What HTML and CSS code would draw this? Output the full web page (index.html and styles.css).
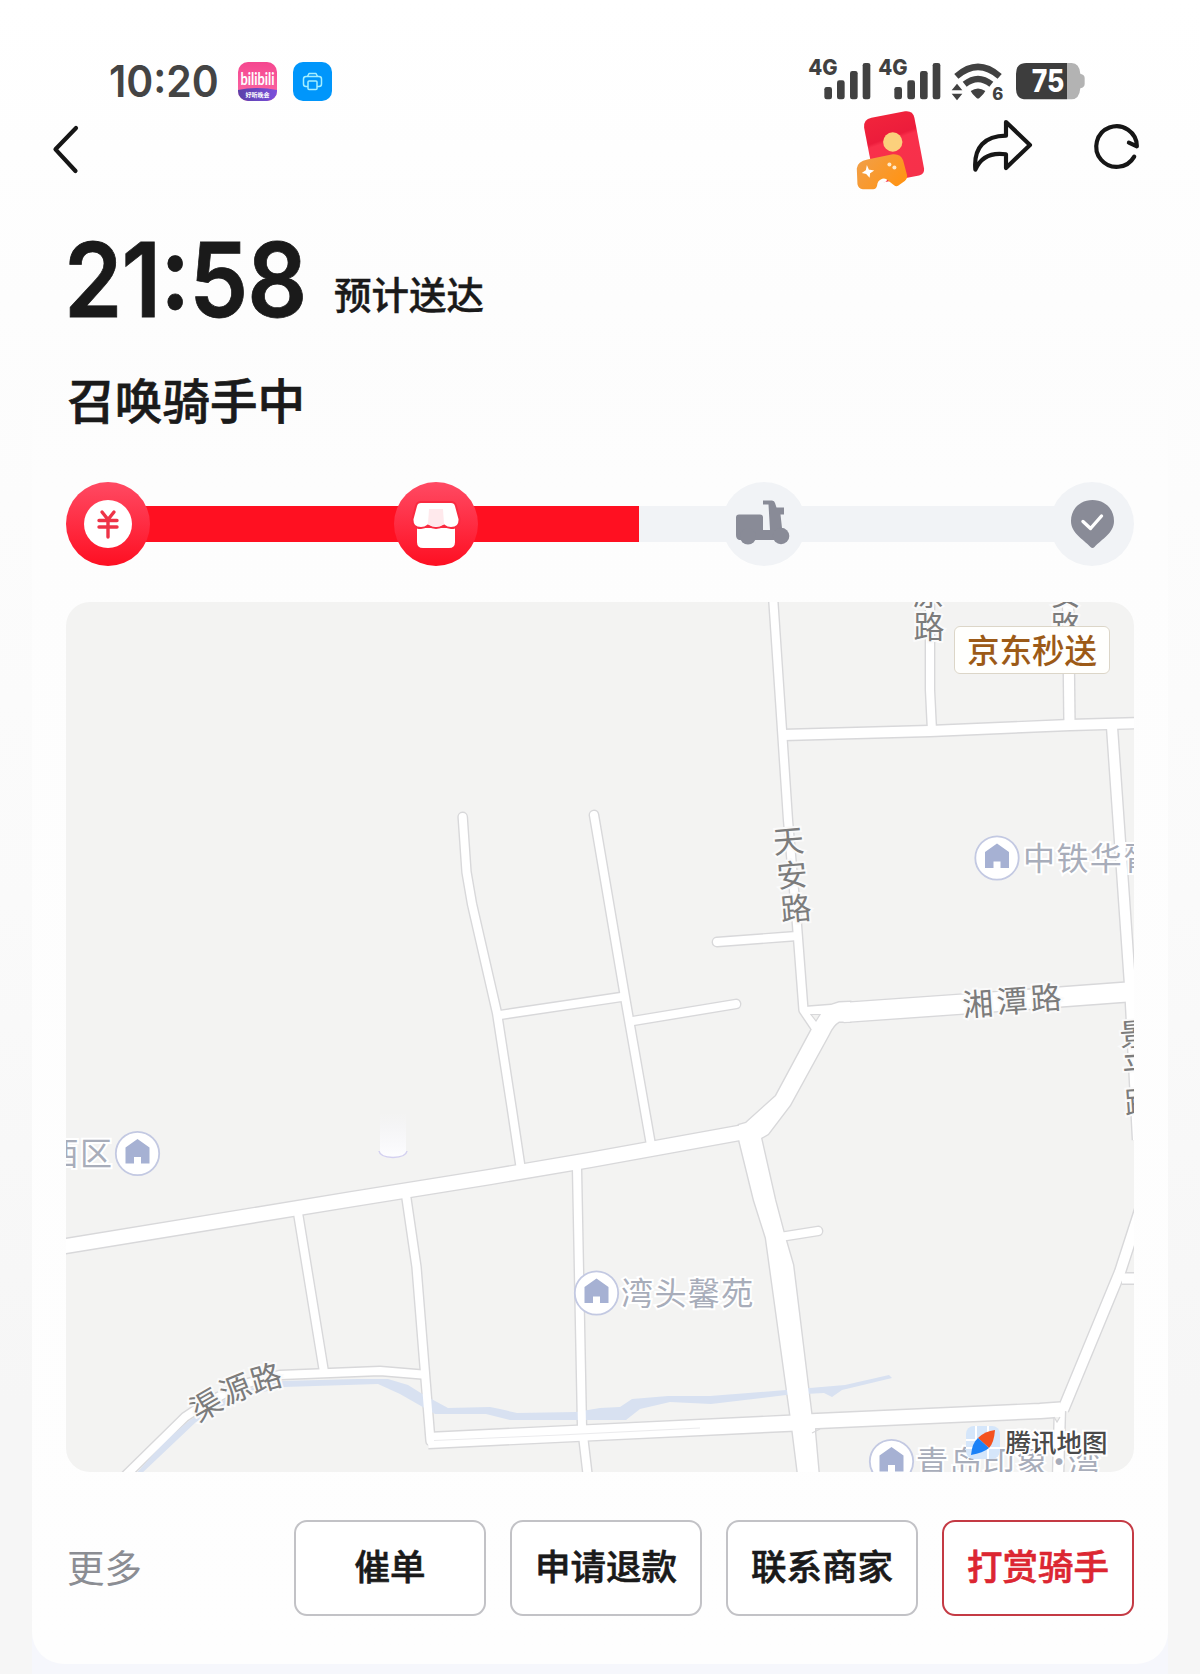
FILE: index.html
```html
<!DOCTYPE html>
<html lang="zh-CN">
<head>
    <meta charset="UTF-8">
    <meta name="viewport" content="width=device-width, initial-scale=1.0">
    <title>订单详情</title>
    <link rel="stylesheet" href="styles.css">
</head>
<body>
    <div class="page">
        <header class="status-bar">
            <div class="status-left">
                <span class="clock"><span class="clock-digits">10<span class="colon">:</span>20</span></span>
                <svg class="app-icon" viewBox="0 0 39 39">
                    <defs>
                        <linearGradient id="pink" x1="0" y1="0" x2="0" y2="1"><stop offset="0" stop-color="#f5478f"/><stop offset="1" stop-color="#fb6aa6"/></linearGradient>
                        <linearGradient id="purple" x1="0" y1="0" x2="1" y2="0"><stop offset="0" stop-color="#5a3fa8"/><stop offset="1" stop-color="#7b50dc"/></linearGradient>
                        <clipPath id="appClip"><rect width="39" height="39" rx="10"/></clipPath>
                    </defs>
                    <g clip-path="url(#appClip)">
                        <rect width="39" height="39" fill="url(#pink)"/>
                        <path d="M0 28 Q20 24 39 28 V39 H0Z" fill="url(#purple)"/>
                    </g>
                    <text class="app-name" x="19.5" y="22.5" textLength="34" lengthAdjust="spacingAndGlyphs">bilibili</text>
                    <text class="app-tag" x="19.5" y="34.5">好听晚会</text>
                </svg>
                <svg class="app-icon" viewBox="0 0 39 39">
                    <rect width="39" height="39" rx="10" fill="#0096fb"/>
                    <g fill="none" stroke="#a5efff" stroke-width="1.5" stroke-linejoin="round">
                        <path d="M15 24.500 H13 Q10.500 24.500 10.500 22 V17 Q10.500 14.500 13 14.500 H26 Q28.500 14.500 28.500 17 V22 Q28.500 24.500 26 24.500 H24"/>
                        <path d="M14.500 14.500 L16 11.500 H23 L24.500 14.500"/>
                        <rect x="15" y="19" width="9" height="8.500" rx="1"/>
                    </g>
                </svg>
            </div>
            <svg class="status-right" viewBox="75 45 870 150">
                <g fill="#414141">
                    <text class="net" x="85" y="105" textLength="88" lengthAdjust="spacingAndGlyphs">4G</text>
                    <rect x="133" y="141" width="23" height="37" rx="7"/>
                    <rect x="171" y="121" width="23" height="57" rx="7"/>
                    <rect x="210" y="93" width="23" height="85" rx="7"/>
                    <rect x="248" y="69" width="23" height="109" rx="7"/>
                    <text class="net" x="295" y="105" textLength="88" lengthAdjust="spacingAndGlyphs">4G</text>
                    <rect x="343" y="141" width="23" height="37" rx="7"/>
                    <rect x="382" y="121" width="23" height="57" rx="7"/>
                    <rect x="420" y="93" width="23" height="85" rx="7"/>
                    <rect x="458" y="69" width="23" height="109" rx="7"/>
                    <path d="M531 131 L547 151 H515Z M531 181 L547 161 H515Z"/>
                    <path d="M572 153 Q594 138 616 153 Q612 162 599 173 Q594 178 589 173 Q576 162 572 153Z"/>
                    <text class="wifi-gen" x="653" y="180">6</text>
                </g>
                <g fill="none" stroke="#414141" stroke-width="19">
                    <path d="M529 109 Q594 52 659 109"/>
                    <path d="M554 133 Q594 101 634 133"/>
                </g>
                <path d="M861 69 H875 Q898 69 901 101 Q914 104 914 114 V132 Q914 142 901 145 Q898 178 875 178 H861Z" fill="#b3b3b3"/>
                <path d="M739 69 H861 V178 H739 Q708 178 708 146 V101 Q708 69 739 69Z" fill="#3d3d3d"/>
                <text class="battery" x="755" y="157" textLength="98" lengthAdjust="spacingAndGlyphs">75</text>
            </svg>
        </header>

        <nav class="nav-bar">
            <svg class="back" viewBox="0 0 30 54" fill="none" stroke="#161616" stroke-width="4.200" stroke-linecap="round" stroke-linejoin="round">
                <path d="M25 6 L4.500 27.300 L24.500 49"/>
            </svg>
            <svg class="nav-actions" viewBox="210 200 900 260">
                <defs>
                    <linearGradient id="packet" x1="0" y1="0" x2="0.300" y2="1"><stop offset="0" stop-color="#f3263c"/><stop offset="0.450" stop-color="#ec1c3b"/><stop offset="0.500" stop-color="#f9304b"/><stop offset="1" stop-color="#f6304a"/></linearGradient>
                    <linearGradient id="pad" x1="0" y1="0" x2="1" y2="0.600"><stop offset="0" stop-color="#f0a04c"/><stop offset="1" stop-color="#ff9416"/></linearGradient>
                </defs>
                <path d="M274 232 L375 213 Q398 210 403 232 L432 385 Q434 402 417 406 L300 428 Q285 430 281 412 L252 262 Q249 237 274 232Z" fill="url(#packet)"/>
                <path d="M285 405 H330 L318 424 L300 434 L291 448 H280Z" fill="#fdfdfd"/>
                <circle cx="338" cy="305" r="29" fill="#fbd07c"/>
                <path d="M262 358 L338 342 Q362 340 369 360 L381 405 Q382 416 374 422 L355 436 Q348 440 341 434 L320 418 Q311 412 302 418 Q292 423 291 436 Q289 447 279 447 H248 Q235 445 232 432 L230 385 Q232 364 262 358Z" fill="url(#pad)"/>
                <path d="M261 381 L265 390 L277 392 L268 398 L267 408 L259 399 L250 397 L259 391Z" fill="#fff" stroke="#fff" stroke-width="4"/>
                <circle cx="328" cy="373" r="6" fill="#ffe9c9"/>
                <circle cx="343" cy="382" r="6" fill="#ffe9c9"/>
                <path d="M678 245 L750 314 L678 383 V342 Q610 332 586 388 C580 320 615 287 678 286Z" fill="none" stroke="#161616" stroke-width="12.500" stroke-linejoin="round"/>
                <path d="M1063 349 A61 61 0 1 1 1071 318 L1047 307" fill="none" stroke="#161616" stroke-width="12.500" stroke-linecap="round" stroke-linejoin="round"/>
            </svg>
        </nav>

        <main class="card">
            <div class="eta">
                <span class="eta-time"><span class="eta-digits">21<span class="colon">:</span>58</span></span>
                <span class="eta-label">预计送达</span>
            </div>
            <h1 class="order-state">召唤骑手中</h1>

            <div class="progress">
                <div class="step done">
                    <svg viewBox="0 0 84 84">
                        <circle cx="42" cy="42" r="24" fill="#fff"/>
                        <path d="M36 30 L42 37.500 L48 30 M33 38.500 H51 M33 45 H51 M42 38 V55" fill="none" stroke="#ee3347" stroke-width="3.400" stroke-linecap="round"/>
                    </svg>
                </div>
                <div class="track"><div class="fill" style="width: 100%"></div></div>
                <div class="step done">
                    <svg viewBox="0 0 84 84">
                        <path d="M23 46 H61 V60 Q61 66 55 66 H29 Q23 66 23 60Z" fill="#fff"/>
                        <path d="M27 20 H57 Q61 20 62 24 L65.500 37 Q66 46 57 46 Q53 46 50 43.500 Q42 48.500 34 43.500 Q31 46 27 46 Q18 46 18.500 37 L22 24 Q23 20 27 20Z" fill="#fff" stroke="#f92a40" stroke-width="2"/>
                        <path d="M35 27 H49 L50 42 Q42 47 34 42Z" fill="#ffe9ec"/>
                    </svg>
                </div>
                <div class="track"><div class="fill" style="width: 65.2%"></div></div>
                <div class="step">
                    <svg viewBox="0 0 84 84" fill="#898b97">
                        <path d="M17 32.500 H38 Q41 32.500 41 35.500 V48 H48 L46.500 22.500 H41 V18.500 H50 Q52.500 18.500 53 21 L54.500 25.500 H62 V32.500 H58.500 L60 46 V58 H17 Q14 57 14 53 V35.500 Q14 32.500 17 32.500Z"/>
                        <circle cx="26" cy="54.500" r="8"/>
                        <circle cx="59" cy="54" r="8.300"/>
                    </svg>
                </div>
                <div class="track"></div>
                <div class="step">
                    <svg viewBox="0 0 84 84">
                        <path d="M42.500 18 C55 18 64 27 64 39 C64 51 52 57 44.500 65 Q42.500 67 40.500 65 C33 57 21 51 21 39 C21 27 30 18 42.500 18Z" fill="#898b97"/>
                        <path d="M33 39.500 L40.500 46.500 L51.500 34" fill="none" stroke="#fff" stroke-width="3.400" stroke-linecap="round" stroke-linejoin="round"/>
                    </svg>
                </div>
            </div>

            <div class="map">
                <svg class="map-canvas" viewBox="66 602 1068 870">
                    <defs>
                        <g id="roads">
                            <path class="lane" d="M773 596 L780 700 L788 820 L797 925 L803.500 1010 L817 1030"/>
                            <path class="lane-10" d="M783 735 L930 731 L1070 725 L1140 723"/>
                            <path class="lane" d="M930 596 L930 690 L932 731"/>
                            <path class="lane-10" d="M1068 596 L1069.500 725"/>
                            <path class="lane-10" d="M1112 727 L1130 985 L1138 1140"/>
                            <path class="lane" d="M717 942 L797 936"/>
                            <path class="lane-19" d="M843 1012.500 L985 1002.500 L1140 991"/>
                            <path class="shape" d="M805 1007 L831 1005 L839 1002.500 L850 1002 V1021.500 L839 1021.500 Q833 1025 829 1034 L790 1105 L768 1134 L761 1138 L775 1200 L784 1234 L793 1265 L811.500 1416 L815 1428 L815 1433 L819 1478 H798.500 L792.500 1430 L766 1238 L754 1200 L739 1139 V1125 L746 1123 L776 1096 L812 1029 L802 1012Z"/>
                            <path class="lane-14" d="M60 1247 L350 1199.500 L490 1177 L590 1160 L750 1131"/>
                            <path class="lane" d="M780 1237 L818 1231"/>
                            <path class="lane" d="M462.700 817 L466.500 872 L472 904 L497 1013 L512 1110 L521 1170"/>
                            <path class="lane" d="M594 815 L625 997 L651 1145"/>
                            <path class="lane" d="M500 1015 L623 996.700"/>
                            <path class="lane" d="M633 1021 L736 1004"/>
                            <path class="lane" d="M298 1213 L324 1372"/>
                            <path class="lane" d="M406 1195 L416.500 1267 L425 1373 L430.500 1441"/>
                            <path class="lane-15" d="M428 1440.500 L500 1437 L795 1423"/>
                            <path class="lane-14" d="M795 1422 L1040 1411 L1061 1409.500"/>
                            <path class="lane" d="M123 1478 L185 1417 L200 1407 L240 1385 L280 1375 L380 1371 L422 1374.500"/>
                            <path class="lane" d="M577 1168 L582 1427 L588 1478"/>
                            <path class="lane-10" d="M1063 1410 L1120 1272 L1141 1207"/>
                            <path class="lane-10" d="M1122 1278.500 H1140"/>
                            <path class="lane-10" d="M1060 1408 L1058 1478"/>
                        </g>
                        <g id="pin">
                            <circle r="21.700" fill="#fff" stroke="#c3c9e2" stroke-width="1.800"/>
                            <path d="M0 -14.500 L12 -6 V10 H3.500 V3.500 H-3.500 V10 H-12 V-6Z" fill="#a6b1d3"/>
                        </g>
                        <linearGradient id="glow" x1="0" y1="0" x2="0" y2="1"><stop offset="0" stop-color="#f8f8fe" stop-opacity="0"/><stop offset="1" stop-color="#fdfdff"/></linearGradient>
                    </defs>

                    <use class="casing" href="#roads"/>

                    <path class="water" d="M134 1476 L165 1441 L190 1420 L240 1391 L282 1381 L357 1379 L388 1379 L408 1385 L424 1395 L448 1408 L490 1407 L500 1409 L517 1413 L576 1412 L600 1408 L620 1407 L632 1399 L668 1396 L710 1396 L786 1390 L845 1385 L889 1375 L892 1378 L842 1390 L832 1397 L824 1393 L786 1395 L711 1404 L670 1402 L640 1409 L626 1420 L510 1420 L486 1414 L435 1414 L400 1394 L378 1384 L284 1387 L242 1397 L196 1422 L139 1476Z"/>

                    <use class="surface" href="#roads"/>
                    <path d="M811 1014.500 H820 L816 1021Z M812 1433 L820 1429 M1054 1417 l3 5 l3 -5" fill="#f2f2f1" stroke="#d8d8da" stroke-width="1.200"/>
                    <path d="M434 1440.500 L560 1435 L700 1428" fill="none" stroke="#ebebed" stroke-width="1"/>

                    <path d="M380 1112 V1152 Q381 1157 393 1157.500 Q405 1157 406 1152 V1112Z" fill="url(#glow)"/>
                    <path d="M379 1151 Q380 1157 393 1157.500 Q406 1157 407 1151" fill="none" stroke="#d3d0f0" stroke-width="1.500"/>

                    <g class="road-name">
                        <text transform="translate(788.500 841) rotate(-5)" y="11.500">天</text>
                        <text transform="translate(792 875) rotate(-5)" y="11.500">安</text>
                        <text transform="translate(796 908.500) rotate(-5)" y="11.500">路</text>
                        <text x="928.500" y="605">原</text>
                        <text x="929" y="638">路</text>
                        <text x="1065.500" y="605">安</text>
                        <text x="1066" y="638">路</text>
                        <text transform="translate(978 1004) rotate(-4)" y="11.500">湘</text>
                        <text transform="translate(1012 1001) rotate(-4)" y="11.500">潭</text>
                        <text transform="translate(1046 998) rotate(-4)" y="11.500">路</text>
                        <text transform="translate(1135 1034) rotate(-4)" y="11.500">景</text>
                        <text transform="translate(1138 1067) rotate(-4)" y="11.500">平</text>
                        <text transform="translate(1140 1102) rotate(-4)" y="11.500">路</text>
                        <text transform="translate(206 1405) rotate(-30)" y="11.500">渠</text>
                        <text transform="translate(235 1389) rotate(-22)" y="11.500">源</text>
                        <text transform="translate(266 1378) rotate(-16)" y="11.500">路</text>
                    </g>
                    <g class="place-name">
                        <use href="#pin" x="997" y="858"/>
                        <text x="1023" y="870">中铁华胥</text>
                        <use href="#pin" x="137.500" y="1153.500"/>
                        <text x="113.500" y="1165" text-anchor="end">西区</text>
                        <use href="#pin" x="596.500" y="1293"/>
                        <text x="621" y="1305">湾头馨苑</text>
                        <use href="#pin" x="891.500" y="1461.500"/>
                        <text x="916" y="1474">青岛印象<tspan x="1043">·</tspan><tspan x="1068">湾</tspan></text>
                    </g>

                    <rect x="966" y="1426" width="34" height="33" rx="8" fill="#d5e6fa"/>
                    <path d="M966 1448 H1000 M988 1426 V1459 M976 1426 V1440 H966" stroke="#fff" stroke-width="2" fill="none"/>
                    <path d="M995 1430 Q994 1443 989 1448 L978 1438 Q985 1431 995 1430Z" fill="#f4511e"/>
                    <path d="M971 1455 Q972 1443 978 1438 L989 1448 Q983 1453 971 1455Z" fill="#1c82f7"/>
                    <text class="provider" x="1005.500" y="1452">腾讯地图</text>
                </svg>
                <span class="map-badge">京东秒送</span>
            </div>

            <div class="actions">
                <a class="more" href="#">更多</a>
                <button class="btn">催单</button>
                <button class="btn">申请退款</button>
                <button class="btn">联系商家</button>
                <button class="btn btn-primary">打赏骑手</button>
            </div>
        </main>
    </div>
</body>
</html>
```
FILE: styles.css
```css
* {
    box-sizing: border-box;
}

body {
    margin: 0;
    font-family: "Noto Sans CJK SC", "Noto Sans", sans-serif;
    color: #1a1a1a;
    background: linear-gradient(#ffffff 0, #fdfdfd 300px, #fafafa 900px, #f6f6f6 1400px);
}

.page {
    width: 1200px;
    height: 1674px;
    padding: 0 30px;
    overflow: hidden;
    display: flex;
    flex-direction: column;
    background: linear-gradient(#f6f7fc, #f6f7fc) 50% 100% / 1136px 60px no-repeat;
}

/* status bar */
.status-bar {
    display: flex;
    justify-content: space-between;
    height: 106px;
    padding: 55px 75px 0 79px;
}

.status-left {
    display: flex;
    align-items: center;
    height: 52px;
}

.clock {
    width: 129px;
    font-family: Inter, sans-serif;
    font-weight: 600;
    font-size: 44px;
    line-height: 52px;
    color: #444;
}

.clock-digits {
    display: inline-block;
    transform: scaleX(0.93);
    transform-origin: left;
}

.colon {
    line-height: 0;
    vertical-align: 0.08em;
}

.app-icon {
    width: 39px;
    height: 39px;
    margin-right: 16px;
}

.app-name {
    font: 700 17px Lato, sans-serif;
    fill: #fff;
    text-anchor: middle;
}

.app-tag {
    font-size: 6px;
    font-weight: 700;
    fill: #fff;
    text-anchor: middle;
}

.status-right {
    width: 290px;
    height: 50px;
}

.net {
    font: 800 64px Inter, sans-serif;
}

.wifi-gen {
    font: 800 50px Inter, sans-serif;
    text-anchor: middle;
}

.battery {
    font: 800 92px Inter, sans-serif;
    fill: #fff;
}

/* navigation */
.nav-bar {
    display: flex;
    justify-content: space-between;
    height: 88px;
    padding: 1px 20px 0 21px;
}

.back {
    width: 30px;
    height: 54px;
    margin-top: 15px;
}

.nav-actions {
    width: 300px;
    height: 86.6px;
}

/* order card */
.card {
    height: 1470px;
    margin: 0 2px;
    padding: 34px 34px 0;
    border-radius: 0 0 32px 32px;
    background: linear-gradient(rgba(254, 254, 254, 0), #fdfdfd 300px, #fefefe);
}

.eta {
    display: flex;
    align-items: flex-start;
    height: 133px;
}

.eta-time {
    width: 268px;
    font-family: Inter, sans-serif;
    font-weight: 600;
    font-size: 103px;
    line-height: 104px;
}

.eta-digits {
    display: inline-block;
    margin-left: -2px;
    letter-spacing: -1px;
    transform: scaleX(0.91);
    transform-origin: left;
    -webkit-text-stroke: 0.8px;
}

.eta-label {
    margin-top: 40px;
    font-size: 37.5px;
    font-weight: 500;
    line-height: 50px;
    -webkit-text-stroke: 0.4px;
}

.order-state {
    margin: 0 0 46px 1.5px;
    font-size: 47.5px;
    font-weight: 500;
    line-height: 75px;
    -webkit-text-stroke: 0.7px;
}

.progress {
    display: flex;
    align-items: center;
    height: 84px;
}

.step {
    flex: none;
    width: 84px;
    height: 84px;
    border-radius: 50%;
    background: #f1f3f6;
    position: relative;
}

.step.done {
    background: linear-gradient(#ff4a63, #fe0f22);
}

.step svg {
    display: block;
}

.track {
    flex: 1;
    height: 36px;
    margin: 0 -6px;
    background: #f1f3f6;
}

.fill {
    height: 100%;
    background: #ff1021;
}

.map {
    position: relative;
    height: 870px;
    margin-top: 36px;
    border-radius: 24px;
    overflow: hidden;
    background: #f3f3f2;
}

.map-canvas {
    display: block;
    width: 100%;
    height: 100%;
}

/* each road is drawn twice: grey casing, then white surface */
.casing {
    --extra: 2.8px;
    stroke: #d8d8da;
    fill: #fff;
}

.surface {
    --extra: 0px;
    stroke: #fff;
    fill: #fff;
}

.lane, .lane-10, .lane-14, .lane-15, .lane-19 {
    fill: none;
    stroke-linejoin: round;
    stroke-width: calc(var(--w) + var(--extra));
}

.lane {
    --w: 8px;
    stroke-linecap: round;
}

.lane-10 { --w: 10px; }
.lane-14 { --w: 14px; }
.lane-15 { --w: 15px; }
.lane-19 { --w: 19px; }

.shape {
    stroke-width: var(--extra);
}

.water {
    fill: #d8e1f1;
}

.road-name text {
    font-size: 31px;
    text-anchor: middle;
    fill: #7c7c7c;
    stroke: #fafafa;
    stroke-width: 4px;
    paint-order: stroke;
}

.place-name text {
    font-size: 32px;
    letter-spacing: 1.4px;
    fill: #a8adba;
    stroke: #fff;
    stroke-width: 4px;
    paint-order: stroke;
}

.provider {
    font-size: 25.5px;
    font-weight: 500;
    fill: #4a4a4a;
    stroke: #fff;
    stroke-width: 4px;
    paint-order: stroke;
}

.map-badge {
    position: absolute;
    top: 24px;
    right: 24px;
    width: 156px;
    height: 48px;
    border: 1px solid #dcd6c8;
    border-radius: 6px;
    background: #fffffd;
    color: #9c5a17;
    font-size: 32.5px;
    font-weight: 500;
    line-height: 44px;
    text-align: center;
}

.actions {
    display: flex;
    align-items: center;
    gap: 24px;
    margin-top: 48px;
}

.more {
    margin: 0 auto 6px 1px;
    color: #8b8d93;
    font-size: 37.5px;
    text-decoration: none;
}

.btn {
    width: 192px;
    height: 96px;
    padding: 0 0 7px;
    border: 2px solid #c2c2c6;
    border-radius: 13px;
    background: #fff;
    color: #1a1a1a;
    font-family: inherit;
    font-size: 35.5px;
    font-weight: 500;
    -webkit-text-stroke: 0.6px;
}

.btn-primary {
    border-color: #c43a44;
    color: #dc2631;
}
```
